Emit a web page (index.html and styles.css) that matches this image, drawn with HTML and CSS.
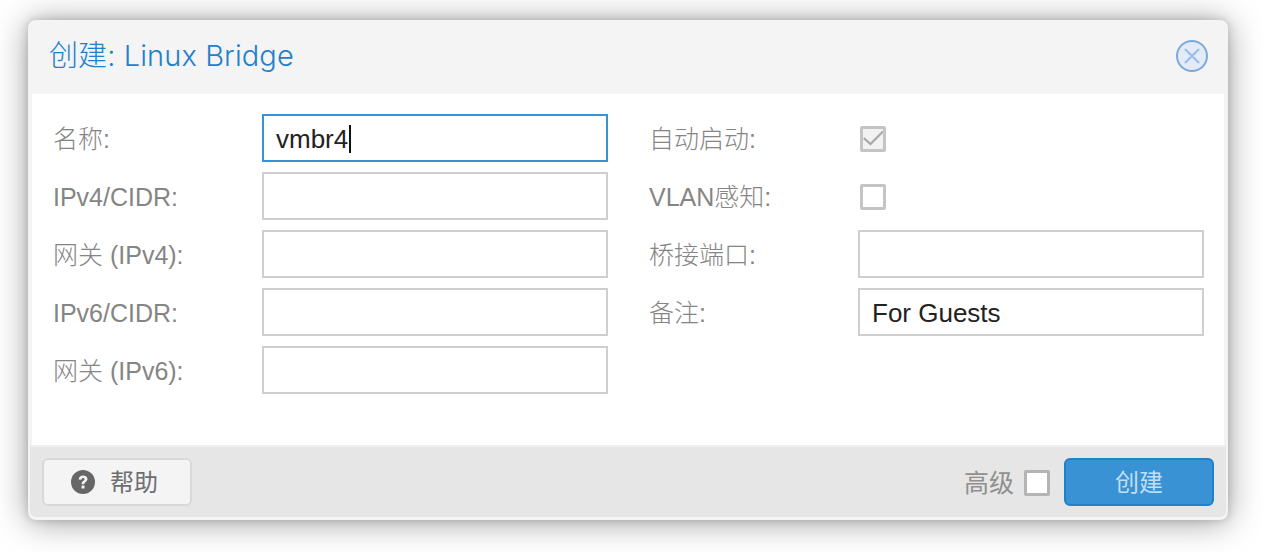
FILE: index.html
```html
<!DOCTYPE html>
<html lang="zh-CN">
<head>
  <meta charset="UTF-8" />
  <title>创建: Linux Bridge</title>
  <link rel="stylesheet" href="styles.css">
</head>
<body>

  <div class="window">
    <div class="header">
      <div class="title">创建: Linux Bridge</div>
      <svg class="close" width="34" height="34" viewBox="0 0 34 34">
        <circle cx="17" cy="17" r="15" fill="#e2ebf6" stroke="#7ba9da" stroke-width="2"/>
        <path d="M10 10 L24 24 M24 10 L10 24" stroke="#9dbfe8" stroke-width="2.4" fill="none"/>
      </svg>
    </div>

    <div class="form">
      <div class="column">
        <div class="row">
          <label>名称:</label>
          <div class="field focused">vmbr4<span class="caret"></span></div>
        </div>
        <div class="row">
          <label>IPv4/CIDR:</label>
          <div class="field"></div>
        </div>
        <div class="row">
          <label>网关 (IPv4):</label>
          <div class="field"></div>
        </div>
        <div class="row">
          <label>IPv6/CIDR:</label>
          <div class="field"></div>
        </div>
        <div class="row">
          <label>网关 (IPv6):</label>
          <div class="field"></div>
        </div>
      </div>

      <div class="column">
        <div class="row">
          <label>自动启动:</label>
          <div class="check row-check disabled">
            <svg width="24" height="24" viewBox="0 0 24 24">
              <path d="M1 11 L9 18 L24 3" stroke="#a8a8a8" stroke-width="2.600" fill="none"/>
            </svg>
          </div>
        </div>
        <div class="row">
          <label>VLAN感知:</label>
          <div class="check row-check"></div>
        </div>
        <div class="row">
          <label>桥接端口:</label>
          <div class="field"></div>
        </div>
        <div class="row">
          <label>备注:</label>
          <div class="field">For Guests</div>
        </div>
      </div>
    </div>

    <div class="footer">
      <button class="help-btn">
        <svg width="24" height="24" viewBox="0 0 24 24">
          <circle cx="12" cy="12" r="12" fill="#666666"/>
          <path d="M7.600 9.400 C7.800 6.800 9.800 5.400 12.200 5.400 C14.600 5.400 16.500 6.900 16.500 9 C16.500 11.600 13.400 11.700 13.400 14.200 L10.600 14.200 C10.600 10.800 13.500 10.800 13.500 9.200 C13.500 8.400 12.900 8 12.100 8 C11.200 8 10.600 8.500 10.400 9.800 Z" fill="#f4f4f4"/>
          <rect x="10.500" y="15.600" width="3" height="3" rx="0.500" fill="#f4f4f4"/>
        </svg>
        <span>帮助</span>
      </button>
      <div class="spacer"></div>
      <span class="advanced">高级</span>
      <div class="check advanced-check"></div>
      <button class="create-btn">创建</button>
    </div>
  </div>

</body>
</html>
```

FILE: styles.css
```css
* {
  margin: 0;
  padding: 0;
  box-sizing: border-box;
  font-family: "Liberation Sans", "Noto Sans CJK SC", sans-serif;
}

body {
  background: #ffffff;
  height: 552px;
  padding: 20px 28px;
  overflow: hidden;
}

.window {
  display: flex;
  flex-direction: column;
  width: 1200px;
  height: 500px;
  background: #f4f4f4;
  border-radius: 8px;
  box-shadow: 0 2px 34px rgba(0, 0, 0, 0.38), 0 0 10px rgba(0, 0, 0, 0.18);
  overflow: hidden;
}

/* Title bar */
.header {
  display: flex;
  align-items: center;
  justify-content: space-between;
  height: 74px;
  padding: 0 19px 2px 21px;
}

.title {
  font-family: Inter, "Noto Sans CJK SC", sans-serif;
  font-size: 29px;
  font-weight: 300;
  line-height: 34px;
  letter-spacing: 0.1px;
  margin-top: -1px;
  color: #1f80cc;
}

.form {
  display: flex;
  gap: 41px;
  height: 351px;
  margin: 0 4px;
  padding: 20px 20px 0 21px;
  background: #ffffff;
}

.column {
  display: flex;
  flex-direction: column;
  gap: 10px;
  width: 555px;
}

.row {
  display: flex;
  align-items: center;
  height: 48px;
}

.row label {
  width: 209px;
  flex-shrink: 0;
  font-size: 25px;
  font-weight: 300;
  line-height: 30px;
  padding-top: 1px;
  color: #858585;
}

.field {
  display: flex;
  align-items: center;
  width: 346px;
  height: 48px;
  padding: 2px 12px 0;
  background: #ffffff;
  border: 2px solid #cfcfcf;
  font-size: 26px;
  color: #222222;
}

.field.focused {
  border-color: #3892d4;
}

.caret {
  width: 2px;
  height: 28px;
  margin-left: 1px;
  background: #111111;
}

.check {
  display: flex;
  align-items: center;
  justify-content: center;
  width: 26px;
  height: 26px;
  background: #ffffff;
  border: 3px solid #c4c4c4;
  border-radius: 2px;
}

.row-check {
  margin: 2px 0 0 2px;
}

.check.disabled {
  background: #f2f2f2;
  overflow: hidden;
}

/* Bottom toolbar */
.footer {
  display: flex;
  align-items: center;
  height: 72px;
  margin: 0 2px;
  padding: 0 12px;
  background: #e6e6e6;
  border-top: 2px solid #eeeeee;
  border-radius: 0 0 6px 6px;
}

.help-btn {
  display: flex;
  align-items: center;
  gap: 15px;
  width: 150px;
  height: 48px;
  padding-left: 27px;
  background: #f4f4f4;
  border: 2px solid #d8d8d8;
  border-radius: 6px;
  font-size: 24px;
  color: #6e6e6e;
}

.help-btn span {
  padding-bottom: 3px;
}

.spacer {
  flex: 1;
}

.advanced {
  padding-bottom: 2px;
  font-size: 25px;
  color: #909090;
}

.advanced-check {
  margin: 2px 14px 0 10px;
  border-color: #b4b4b4;
}

.create-btn {
  width: 150px;
  height: 48px;
  padding-bottom: 3px;
  background: #3892d4;
  border: 2px solid #1f80cc;
  border-radius: 6px;
  font-size: 24px;
  color: #c4def3;
}
```
